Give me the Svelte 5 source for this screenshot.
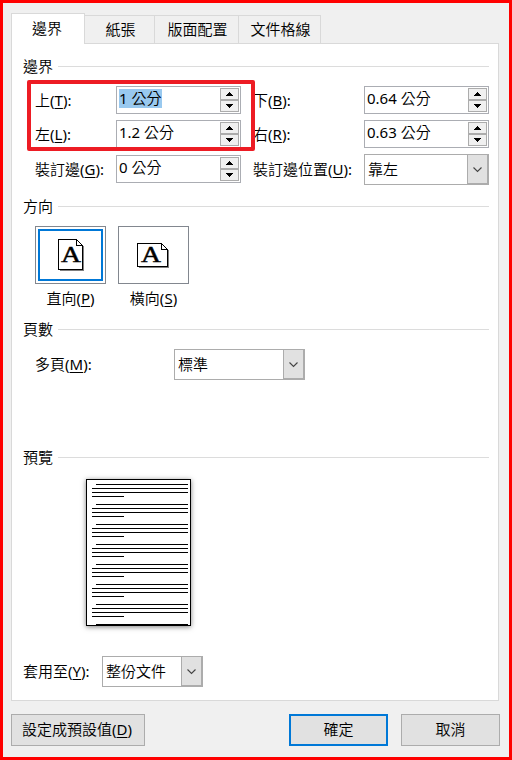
<script>
  const tabs = [
    { text: '邊界', width: 74 },
    { text: '紙張', width: 70 },
    { text: '版面配置', width: 84 },
    { text: '文件格線', width: 82 }
  ];

  let activeTab = $state(0);
  let orientation = $state('portrait');

  // four lines per paragraph, a new paragraph every 20px
  const paragraphs = [0, 1, 2, 3, 4, 5, 6];
</script>

{#snippet label(text, key)}
  <span class="label">{text}<span class="latin">(<u>{key}</u>):</span></span>
{/snippet}

{#snippet spinner(value, selected)}
  <div class="spinner">
    <span class="value"><span class:selected><span class="latin">{value}</span> 公分</span></span>
    <div class="steps">
      <button type="button" aria-label="+">
        <svg width="7" height="4" shape-rendering="crispEdges"><path d="M3 0h1v1h1v1h1v1h1v1H0V3h1V2h1V1h1z" /></svg>
      </button>
      <button type="button" aria-label="-">
        <svg width="7" height="4" shape-rendering="crispEdges"><path d="M0 0h7v1H6v1H5v1H4v1H3V3H2V2H1V1H0z" /></svg>
      </button>
    </div>
  </div>
{/snippet}

{#snippet combo(value)}
  <div class="combo">
    <span>{value}</span>
    <button type="button" aria-label={value}>
      <svg width="9" height="5"><path d="M.5 .5 4.500 4.500 8.500 .5" fill="none" stroke="#444" stroke-width="1.1" /></svg>
    </button>
  </div>
{/snippet}

<div class="dialog">
  <div class="tabs">
    {#each tabs as tab, i}
      <button type="button" class="tab" class:active={activeTab === i} style:width="{tab.width}px" onclick={() => (activeTab = i)}>
        {tab.text}
      </button>
    {/each}
  </div>

  <div class="panel">
    <section class="margins">
      <h2>邊界</h2>
      <div class="fields">
        {@render label('上', 'T')}
        {@render spinner('1', true)}
        {@render label('下', 'B')}
        {@render spinner('0.64')}
        {@render label('左', 'L')}
        {@render spinner('1.2')}
        {@render label('右', 'R')}
        {@render spinner('0.63')}
        {@render label('裝訂邊', 'G')}
        {@render spinner('0')}
        {@render label('裝訂邊位置', 'U')}
        {@render combo('靠左')}
      </div>
      <div class="marker"></div>
    </section>

    <section class="orientation">
      <h2>方向</h2>
      <div class="choices">
        <div class="choice">
          <button type="button" class:chosen={orientation === 'portrait'} aria-label="直向" onclick={() => (orientation = 'portrait')}>
            <svg width="25" height="32" shape-rendering="crispEdges">
              <path d="M2 31.5h23.500V7" fill="none" stroke="#808080" />
              <path d="M.5 .5h18l6 6v24H.5z" fill="#fff" stroke="#000" />
              <path d="M18.500 .5v6h6" fill="none" stroke="#000" />
              <text x="3" y="23" textLength="20" lengthAdjust="spacingAndGlyphs">A</text>
            </svg>
          </button>
          <span>直向<span class="latin">(<u>P</u>)</span></span>
        </div>
        <div class="choice">
          <button type="button" class:chosen={orientation === 'landscape'} aria-label="橫向" onclick={() => (orientation = 'landscape')}>
            <svg width="33" height="24" shape-rendering="crispEdges">
              <path d="M2 24.500h29.500V7" fill="none" stroke="#808080" />
              <path d="M.5 .5h24l6 6v17H.5z" fill="#fff" stroke="#000" />
              <path d="M24.500 .5v6h6" fill="none" stroke="#000" />
              <text x="4" y="19" textLength="20" lengthAdjust="spacingAndGlyphs">A</text>
            </svg>
          </button>
          <span>橫向<span class="latin">(<u>S</u>)</span></span>
        </div>
      </div>
    </section>

    <section class="pages">
      <h2>頁數</h2>
      <div class="row">
        {@render label('多頁', 'M')}
        {@render combo('標準')}
      </div>
    </section>

    <section class="preview">
      <h2>預覽</h2>
      <svg class="sheet" width="105" height="147" shape-rendering="crispEdges">
        <rect x=".5" y=".5" width="104" height="146" fill="#fff" stroke="#000" />
        {#each paragraphs as p}
          <path d="M10 {5.5 + p * 20}h92m-96 4h96m-96 4h96m-96 4h32" stroke="#000" fill="none" />
        {/each}
        <path d="M10 145.500h92" stroke="#000" />
      </svg>
    </section>

    <div class="apply">
      {@render label('套用至', 'Y')}
      {@render combo('整份文件')}
    </div>
  </div>

  <div class="footer">
    <button type="button" class="default">設定成預設值<span class="latin">(<u>D</u>)</span></button>
    <button type="button" class="ok">確定</button>
    <button type="button">取消</button>
  </div>
</div>

<style>
  :global(body) {
    margin: 0;
  }

  .dialog {
    box-sizing: border-box;
    width: 512px;
    height: 760px;
    padding: 10px 9px 0 8px;
    border: 3px solid #f00;
    background: #f0f0f0;
    color: #000;
    font: 350 15px/20px "Noto Sans", "Noto Sans CJK TC", sans-serif;
  }

  .dialog * {
    box-sizing: border-box;
  }

  button {
    padding: 0;
    border: 1px solid #acacac;
    border-radius: 0;
    background: #e1e1e1;
    color: #000;
    font: inherit;
  }

  svg {
    display: block;
    overflow: visible;
  }

  u {
    text-underline-offset: 2px;
    text-decoration-thickness: 1px;
  }

  .latin {
    font-weight: 400;
  }

  .tabs {
    display: flex;
    align-items: flex-end;
    height: 31px;
    margin-bottom: -1px;
  }

  .tab {
    height: 29px;
    padding: 0 0 2px 2px;
    border-color: #d9d9d9;
    border-left: 0;
    background: #f0f0f0;
  }

  .tab.active {
    height: 31px;
    padding: 0 2px 2px 0;
    border-left: 1px solid #d9d9d9;
    border-bottom: 0;
    background: #fff;
    z-index: 1;
  }

  .panel {
    width: 488px;
    height: 658px;
    padding: 12px 9px 0 11px;
    border: 1px solid #d9d9d9;
    background: #fff;
  }

  section {
    position: relative;
  }

  h2 {
    display: flex;
    align-items: center;
    gap: 5px;
    height: 20px;
    margin: 0;
    font-size: 15px;
    font-weight: inherit;
  }

  h2::after {
    content: "";
    flex: 1;
    height: 1px;
    background: #dcdcdc;
  }

  .margins {
    height: 140px;
  }

  .fields {
    display: grid;
    grid-template-columns: 81px 125px 123px 125px;
    grid-template-rows: 34px 34px 31px;
    padding: 10px 0 0 12px;
  }

  .fields > :nth-child(4n + 3) {
    padding-left: 12px;
  }

  .fields > :nth-child(10) {
    margin-top: 1px;
  }

  .label {
    padding-top: 5px;
    white-space: nowrap;
  }

  .fields > :nth-child(2n + 1):nth-child(-n + 7) {
    padding-top: 4px;
  }

  .spinner {
    display: flex;
    justify-content: space-between;
    height: 28px;
    padding: 1px 1px 1px 2px;
    border: 1px solid #abadb3;
    background: #fff;
  }

  .value {
    line-height: 18px;
    white-space: pre;
  }

  .value > span {
    display: block;
    height: 19px;
    margin-top: 1px;
  }

  .value > .selected {
    background: #99c9ef;
  }

  .steps {
    width: 19px;
  }

  .steps button {
    display: grid;
    place-items: center;
    width: 19px;
    height: 12px;
    background: #f0f0f0;
  }

  .combo {
    display: flex;
    justify-content: space-between;
    height: 31px;
    border: 1px solid #acacac;
    background: #fff;
  }

  .combo span {
    padding: 4px 0 0 3px;
  }

  .combo button {
    display: grid;
    place-items: center;
    width: 21px;
    border-width: 0 1px 1px;
  }

  .marker {
    position: absolute;
    left: 4px;
    top: 24px;
    width: 228px;
    height: 71px;
    border: 4px solid #ed1c24;
    border-radius: 2px;
  }

  .orientation {
    height: 123px;
  }

  .choices {
    display: flex;
    gap: 12px;
    padding: 10px 0 0 12px;
  }

  .choice {
    width: 71px;
    text-align: center;
  }

  .choice button {
    display: grid;
    place-items: center;
    width: 71px;
    height: 58px;
    margin-bottom: 4px;
    border-color: #82878f;
    background: #fff;
  }

  .choice .chosen {
    box-shadow: inset 0 0 0 2px #fff, inset 0 0 0 4px #0078d7;
  }

  .choice text {
    font: 24px "Liberation Serif", serif;
    stroke: #000;
    stroke-width: 0.5px;
  }

  .pages {
    height: 128px;
  }

  .row {
    display: grid;
    grid-template-columns: 139px 131px;
    padding: 10px 0 0 12px;
  }

  .preview {
    height: 209px;
  }

  .sheet {
    margin: 12px 0 0 63px;
    box-shadow: 0 1px 5px rgba(0, 0, 0, 0.5);
  }

  .apply {
    display: grid;
    grid-template-columns: 79px 101px;
  }

  .footer {
    display: grid;
    grid-template-columns: 265px 99px 99px;
    column-gap: 13px;
    padding-top: 13px;
  }

  .footer button {
    height: 32px;
    padding-bottom: 2px;
  }

  .footer .default {
    width: 134px;
    padding-right: 2px;
  }

  .footer .ok {
    border: 2px solid #0078d7;
  }
</style>
